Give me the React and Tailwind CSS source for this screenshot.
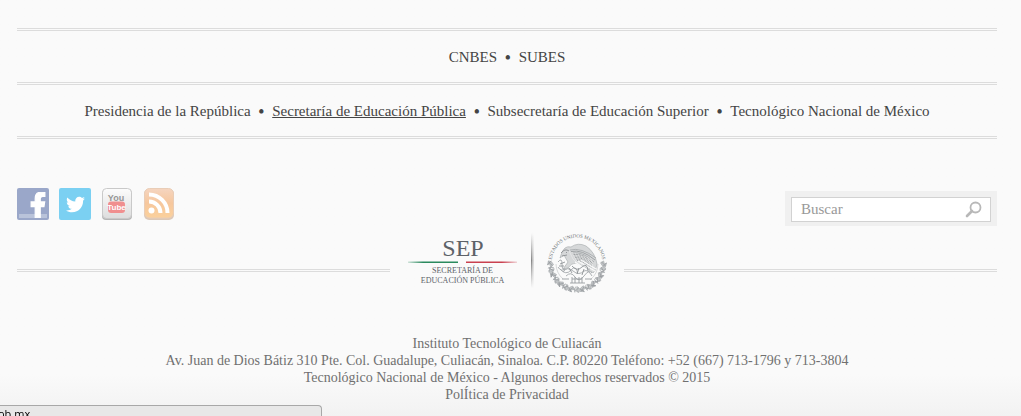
import React from "react";
import { FaFacebookF, FaTwitter } from "react-icons/fa";

const portals = [
  { label: "CNBES" },
  { label: "SUBES" },
];

const agencies = [
  { label: "Presidencia de la República" },
  { label: "Secretaría de Educación Pública", active: true },
  { label: "Subsecretaría de Educación Superior" },
  { label: "Tecnológico Nacional de México" },
];

function LinkRow({ items, label }) {
  return (
    <nav
      aria-label={label}
      className="flex h-[54px] items-center justify-center border-t-[3px] border-double border-[#dcdcdc] pt-0.5 text-[15px] leading-[17px] text-[#444]"
    >
      <ul className="flex items-center gap-2">
        {items.map((item, i) => (
          <React.Fragment key={item.label}>
            {i > 0 && (
              <li aria-hidden="true" className="text-base leading-[17px] font-bold">
                •
              </li>
            )}
            <li>
              <a href="#" className={item.active ? "underline" : "hover:underline"}>
                {item.label}
              </a>
            </li>
          </React.Fragment>
        ))}
      </ul>
    </nav>
  );
}

function YouTubeIcon() {
  return (
    <svg viewBox="0 0 32 32" className="size-8" aria-hidden="true">
      <defs>
        <linearGradient id="yt" x1="0" y1="0" x2="0" y2="1">
          <stop offset="0" stopColor="#fcfcfc" />
          <stop offset="1" stopColor="#dddddd" />
        </linearGradient>
      </defs>
      <rect x="1" y="1.5" width="30" height="30.5" rx="4" fill="#b5b5b5" />
      <rect x="1.5" y="0.5" width="29" height="30" rx="4" fill="url(#yt)" stroke="#c9c9c9" />
      <text x="15" y="13" textAnchor="middle" fontFamily="'Liberation Sans Narrow', sans-serif" fontSize="9" fontWeight="700" fill="#979797">
        You
      </text>
      <rect x="7" y="13.5" width="17" height="11.5" rx="3" fill="#f08f8f" />
      <text x="15.5" y="22.3" textAnchor="middle" fontFamily="'Liberation Sans Narrow', sans-serif" fontSize="8" fontWeight="700" fill="#fff">
        Tube
      </text>
    </svg>
  );
}

function FeedIcon() {
  return (
    <svg viewBox="0 0 32 32" className="size-8" aria-hidden="true">
      <defs>
        <linearGradient id="rss" x1="0" y1="0" x2="0" y2="1">
          <stop offset="0" stopColor="#f5d5c0" />
          <stop offset="0.5" stopColor="#f6c79d" />
          <stop offset="1" stopColor="#fbd19c" />
        </linearGradient>
      </defs>
      <rect x="1" y="1" width="30" height="31" rx="5" fill="#dcc8b7" />
      <rect x="1.5" y="0.5" width="29" height="29.5" rx="5" fill="url(#rss)" stroke="#e9cdb7" />
      <circle cx="8.500" cy="22.5" r="3" fill="#fff" />
      <path d="M6 13.500A11.500 11.500 0 0 1 17.500 25M6 6.500A18.500 18.500 0 0 1 24.500 25" fill="none" stroke="#fff" strokeWidth="4" />
    </svg>
  );
}

const wreath = Array.from({ length: 15 }, (_, i) => 2 + i * 12.6);
const feathers = [0, 1, 2, 3, 4, 5, 6, 7];

function Seal() {
  return (
    <g transform="translate(187 33)" fill="none" stroke="#a3a7aa" strokeWidth="0.9">
      <path id="seal-arc" d="M-25.200 3A25.400 25.400 0 1 1 25.200 3" stroke="none" />
      <text fontFamily="'Liberation Serif', serif" fontSize="5" fill="#6f7477" stroke="none">
        <textPath href="#seal-arc" startOffset="50%" textAnchor="middle">
          ESTADOS UNIDOS MEXICANOS
        </textPath>
      </text>
      {wreath.map((a, i) => (
        <g key={a} transform={`rotate(${a}) translate(26.500 0)`}>
          <path
            d={i % 2 ? "M-3 0Q-1-4 3-2Q2 1-3 0M-3 1Q0 4 3 2" : "M-3-1L0-3L1 0L3-1L2 3L-1 2Z"}
            fill="#c4c7c9"
            strokeWidth="0.6"
          />
          <path d="M-2-2L2 2M-1 3L3-1" stroke="#92969a" strokeWidth="0.7" />
        </g>
      ))}
      <path d="M21 1A21 21 0 0 1 13 17M-21 1A21 21 0 0 0-14 16" strokeWidth="0.4" />
      <path d="M-16-8Q-13-18-6-16Q1-21 9-17Q18-11 20 1Q19 8 16 10L8 4L-1 0Q-6 0-9 5L-14 6L-9-1Q-11-4-13-8L-17-5Z" fill="#d6d8d9" strokeWidth="0.6" />
      <path d="M-16-10Q-12-15-8-12M-15-7L-10-8M-11-11L-10-10" stroke="#8c9093" />
      {feathers.map((n) => (
        <path key={n} d={`M${-7 + n} ${-13 + n * 1.5}Q${4 + n} ${-16 + n * 2} ${19 - n} ${-5 + n * 2}`} stroke={n % 2 ? "#8f9396" : "#a3a7aa"} strokeWidth="0.8" />
      ))}
      {feathers.map((n) => (
        <path key={n} d={`M${-8 + n * 3} ${-12 + n}Q${-5 + n * 3}-3 ${2 + n * 2} ${2 + n}`} stroke="#eeeeee" strokeWidth="0.6" />
      ))}
      <path d="M-2-1L16 11M1-2L18 8M4-3L19 6" stroke="#fafafa" strokeWidth="1.2" />
      <path d="M-19-1Q-15-6-15 1T-12 6Q-16 9-19 4M-17 6Q-11 13-6 7T1 11M-14 9Q-10 3-4 8T7 8Q11 6 15 13M-11 13Q-6 8-2 14T7 13T15 10" />
      <path d="M-5 3Q0 9 5 4T11 8M-8 5L-5 10M2 5L0 11M7 6L5 12M-17 1L-12-1M-18 3L-13 3" stroke="#8f9396" />
      <path d="M-15 16H-8M-5 14V20M-2 14V20M2 14V20M5 14V20M-7 20H8M8 16H15M-5 16H5" stroke="#999da0" />
    </g>
  );
}

function SepLogo() {
  return (
    <svg viewBox="0 0 234 64" className="h-16 w-[234px] shrink-0" role="img" aria-label="SEP, Secretaría de Educación Pública">
      <defs>
        <linearGradient id="green" x1="0" x2="1">
          <stop offset="0" stopColor="#2b8a5e" stopOpacity="0.2" />
          <stop offset="0.3" stopColor="#2b8a5e" />
          <stop offset="1" stopColor="#2b8a5e" />
        </linearGradient>
        <linearGradient id="red" x1="0" x2="1">
          <stop offset="0" stopColor="#c9404f" />
          <stop offset="0.7" stopColor="#c9404f" />
          <stop offset="1" stopColor="#c9404f" stopOpacity="0.2" />
        </linearGradient>
        <linearGradient id="fade" x1="0" y1="0" x2="0" y2="1">
          <stop offset="0" stopColor="#888" stopOpacity="0" />
          <stop offset="0.5" stopColor="#888" />
          <stop offset="1" stopColor="#888" stopOpacity="0" />
        </linearGradient>
      </defs>
      <g fontFamily="'Liberation Serif', serif" fill="#5d6268" textAnchor="middle">
        <text x="73" y="26" fontSize="24">SEP</text>
        <text x="72.5" y="43" fontSize="8">SECRETARÍA DE</text>
        <text x="72.5" y="53" fontSize="8">EDUCACIÓN PÚBLICA</text>
      </g>
      <rect x="18" y="31.5" width="50" height="1.5" fill="url(#green)" />
      <rect x="76" y="31.5" width="51" height="1.5" fill="url(#red)" />
      <rect x="141" y="3" width="1.3" height="55" fill="url(#fade)" />
      <rect x="142" y="3" width="2" height="55" fill="url(#fade)" opacity="0.3" />
      <Seal />
    </svg>
  );
}

export default function App() {
  return (
    <div className="min-h-screen bg-linear-to-b from-[#fafafa] from-90% to-[#f2f2f2] font-['Liberation_Serif',serif]">
      <footer className="pt-7 pr-6 pb-3 pl-[17px]">
        <LinkRow items={portals} label="Portales" />
        <LinkRow items={agencies} label="Dependencias" />
        <div className="border-t-[3px] border-double border-[#dcdcdc]" />

        <div className="mt-[49px] flex items-start justify-between">
          <div className="flex gap-2.5">
            <a href="#" aria-label="Facebook" className="relative flex size-8 items-end justify-end overflow-hidden rounded-xs bg-[#9aa7c9] pr-[3px] pb-0.5 text-white">
              <span className="absolute inset-x-0.5 bottom-0.5 h-1 bg-[#b9c3da]" />
              <FaFacebookF className="relative h-[26px] w-4 stroke-white stroke-[24px]" />
            </a>
            <a href="#" aria-label="Twitter" className="flex size-8 items-center justify-center rounded-xs bg-[#7bd0f2] text-white">
              <FaTwitter className="size-[19px]" />
            </a>
            <a href="#" aria-label="YouTube"><YouTubeIcon /></a>
            <a href="#" aria-label="RSS"><FeedIcon /></a>
          </div>

          <form role="search" onSubmit={(e) => e.preventDefault()} className="mt-[3px] bg-[#f0f0f0] px-1.5 pt-1.5 pb-1">
            <div className="flex h-[25px] w-[200px] items-center border border-[#d2d2d2] bg-white pr-2 pl-[9px]">
              <input
                type="text"
                aria-label="Buscar"
                placeholder="Buscar"
                className="min-w-0 flex-1 bg-transparent text-[15px] leading-[17px] outline-none placeholder:text-[#999]"
              />
              <button type="submit" aria-label="Iniciar búsqueda" className="shrink-0">
                <svg viewBox="0 0 17 17" className="size-[17px]" fill="none" stroke="#b8b8b8" aria-hidden="true">
                  <circle cx="10.5" cy="6.5" r="5" strokeWidth="1.8" />
                  <path d="M7 10L2 15" strokeWidth="2.6" strokeLinecap="round" />
                </svg>
              </button>
            </div>
          </form>
        </div>

        <div className="mt-1 flex items-center">
          <div className="mt-4 flex-1 border-t-[3px] border-double border-[#dcdcdc]" />
          <SepLogo />
          <div className="mt-4 flex-1 border-t-[3px] border-double border-[#dcdcdc]" />
        </div>

        <div className="mt-[41px] text-center text-sm leading-[17px] text-[#707070]">
          <p>Instituto Tecnológico de Culiacán</p>
          <p>Av. Juan de Dios Bátiz 310 Pte. Col. Guadalupe, Culiacán, Sinaloa. C.P. 80220 Teléfono: +52 (667) 713-1796 y 713-3804</p>
          <p>Tecnológico Nacional de México - Algunos derechos reservados © 2015</p>
          <p><a href="#">PolÍtica de Privacidad</a></p>
        </div>
      </footer>

      <div className="fixed bottom-0 left-0 h-[11px] w-[322px] overflow-hidden rounded-tr border-t border-r border-[#a8a8a8] bg-[#e8e8e8] font-['Open_Sans',sans-serif] text-[11px] leading-4 text-black">
        <span className="-ml-0.5">ob.mx</span>
      </div>
    </div>
  );
}
